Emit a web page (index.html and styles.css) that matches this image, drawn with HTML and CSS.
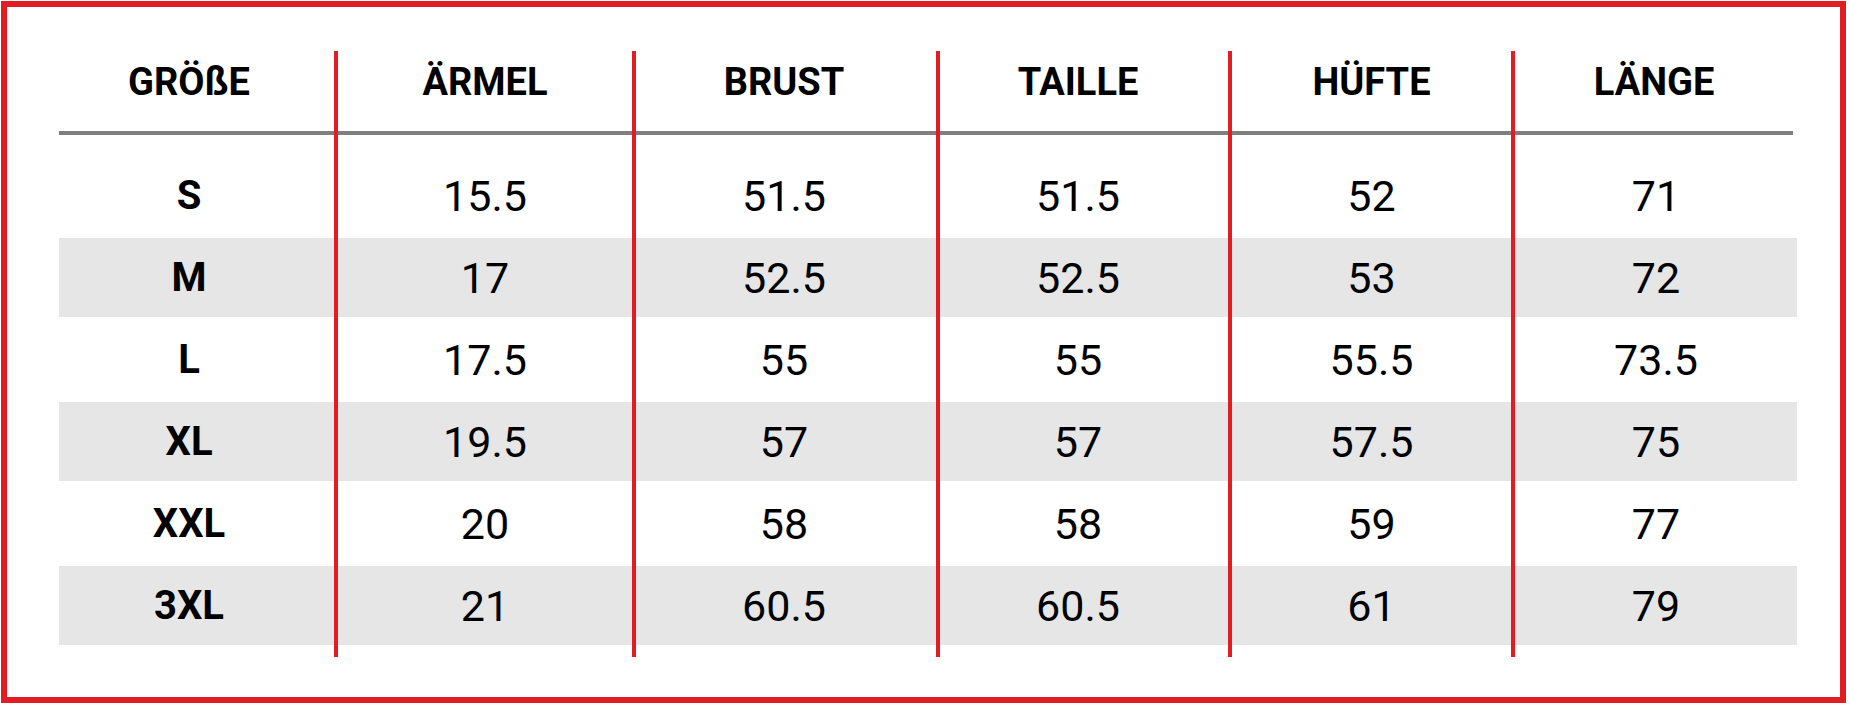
FILE: index.html
```html
<!DOCTYPE html>
<html lang="de">
<head>
<meta charset="utf-8">
<title>Größentabelle</title>
<link rel="stylesheet" href="styles.css">
</head>
<body>
<div class="frame">
  <div class="chart">
    <div class="col col-size">
      <div class="head">GRÖßE</div>
      <div class="cell">S</div>
      <div class="cell">M</div>
      <div class="cell">L</div>
      <div class="cell">XL</div>
      <div class="cell">XXL</div>
      <div class="cell">3XL</div>
    </div>
    <div class="col c2">
      <div class="head">ÄRMEL</div>
      <div class="cell">15.5</div>
      <div class="cell">17</div>
      <div class="cell">17.5</div>
      <div class="cell">19.5</div>
      <div class="cell">20</div>
      <div class="cell">21</div>
    </div>
    <div class="col c3">
      <div class="head">BRUST</div>
      <div class="cell">51.5</div>
      <div class="cell">52.5</div>
      <div class="cell">55</div>
      <div class="cell">57</div>
      <div class="cell">58</div>
      <div class="cell">60.5</div>
    </div>
    <div class="col c4">
      <div class="head">TAILLE</div>
      <div class="cell">51.5</div>
      <div class="cell">52.5</div>
      <div class="cell">55</div>
      <div class="cell">57</div>
      <div class="cell">58</div>
      <div class="cell">60.5</div>
    </div>
    <div class="col c5">
      <div class="head">HÜFTE</div>
      <div class="cell">52</div>
      <div class="cell">53</div>
      <div class="cell">55.5</div>
      <div class="cell">57.5</div>
      <div class="cell">59</div>
      <div class="cell">61</div>
    </div>
    <div class="col c6 last">
      <div class="head">LÄNGE</div>
      <div class="cell">71</div>
      <div class="cell">72</div>
      <div class="cell">73.5</div>
      <div class="cell">75</div>
      <div class="cell">77</div>
      <div class="cell">79</div>
    </div>
  </div>
</div>
</body>
</html>
```

FILE: styles.css
```css
html, body {
  margin: 0;
  padding: 0;
  background: #ffffff;
}

body {
  font-family: Roboto, "Liberation Sans", Arial, sans-serif;
  color: #000000;
}

.frame {
  box-sizing: border-box;
  margin: 1px 0 0 1px;
  width: 1845px;
  height: 702px;
  border: 6px solid #e31b23;
  padding: 44px 43px 0 52px;
}

.chart {
  display: flex;
  align-items: flex-start;
}

.col {
  box-sizing: border-box;
  display: flex;
  flex-direction: column;
  border-right: 4px solid #e31b23;
  padding-bottom: 12px;
}

.col.last {
  border-right: none;
}

.col-size { width: 279px; }
.c2 { width: 298px; }
.c3 { width: 304px; }
.c4 { width: 292px; }
.c5 { width: 283px; }
.c6 { width: 282px; }

.head {
  height: 44px;
  line-height: 44px;
  padding: 9px 0 27px;
  margin-bottom: 18px;
  border-bottom: 4px solid #7f7f7f;
  text-align: center;
  font-size: 38px;
  font-weight: 700;
}

.last .head {
  margin-right: 4px;
}

.cell {
  display: flex;
  align-items: center;
  justify-content: center;
  height: 85px;
  font-size: 43px;
  font-weight: 400;
}

.cell:nth-child(odd) {
  height: 79px;
  background: #e6e6e6;
}

.col-size .cell {
  font-size: 40px;
  font-weight: 700;
  padding-right: 15px;
}

.col-size .head {
  padding-right: 15px;
}

.c3 .head,
.c3 .cell {
  padding-right: 4px;
}

.c4 .head,
.c4 .cell {
  padding-right: 12px;
}
```
